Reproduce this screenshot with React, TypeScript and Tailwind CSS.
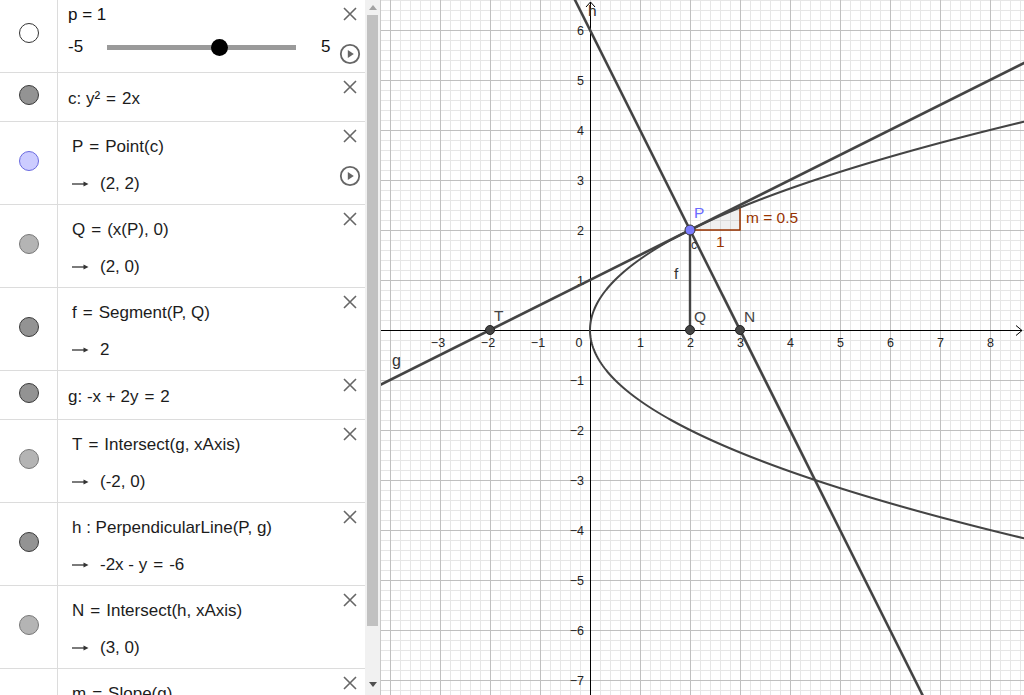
import React from "react";

function XIcon() {
  return (
    <svg width="16" height="16" viewBox="0 0 16 16">
      <path d="M2 2 L14 14 M14 2 L2 14" stroke="#666" strokeWidth="1.6" />
    </svg>
  );
}

function PlayIcon() {
  return (
    <svg width="22" height="22" viewBox="0 0 22 22">
      <circle cx="11" cy="11" r="9.2" fill="none" stroke="#666" strokeWidth="1.8" />
      <path d="M8.8 7 L14.8 11 L8.8 15 Z" fill="#666" />
    </svg>
  );
}

function Arrow() {
  return (
    <svg width="17" height="8" viewBox="0 0 17 8" className="shrink-0">
      <path d="M0 4 H14" stroke="#333" strokeWidth="1.3" />
      <path d="M11.5 1.5 L16.5 4 L11.5 6.5 Z" fill="#333" />
    </svg>
  );
}

function Eq({ text }: { text: string }) {
  const parts = text.split(" = ");
  return (
    <>
      {parts.map((p, i) => (
        <React.Fragment key={i}>
          {i > 0 && <span className="px-[6px]">=</span>}
          {p}
        </React.Fragment>
      ))}
    </>
  );
}

function Out({ text }: { text: string }) {
  return (
    <div className="flex items-center h-[20px]">
      <Arrow />
      <span className="ml-[11px]">
        <Eq text={text} />
      </span>
    </div>
  );
}

type RowProps = {
  h: string;
  marker: string;
  mt: string;
  pt: string;
  pl: string;
  play?: boolean;
  playMt?: string;
  children: React.ReactNode;
};

function Row({ h, marker, mt, pt, pl, play, playMt, children }: RowProps) {
  return (
    <div className={`flex shrink-0 border-b border-[#dcdcdc] ${h}`}>
      <div className="w-[58px] shrink-0 border-r border-[#dcdcdc] flex justify-center">
        <div className={`w-[20px] h-[20px] rounded-full border ${marker} ${mt}`} />
      </div>
      <div className={`flex-1 flex flex-col gap-[17px] leading-[20px] text-[17px] text-[#1c1c1c] ${pt} ${pl}`}>
        {children}
      </div>
      <div className="w-[26px] mr-[2px] flex flex-col items-center pt-[6px]">
        <XIcon />
        {play && (
          <div className={playMt}>
            <PlayIcon />
          </div>
        )}
      </div>
    </div>
  );
}

const DARK = "bg-[#939393] border-[#3a3a3a]";
const LIGHT = "bg-[#b4b4b4] border-[#787878]";

function Algebra() {
  return (
    <div className="w-[365px] h-full overflow-hidden shrink-0 flex flex-col bg-white">
      <div className="flex shrink-0 h-[73px] border-b border-[#dcdcdc]">
        <div className="w-[58px] shrink-0 border-r border-[#dcdcdc] flex justify-center">
          <div className="w-[20px] h-[20px] rounded-full border bg-white border-[#333] mt-[23px]" />
        </div>
        <div className="flex-1 flex flex-col pt-[5px] pl-[10px] leading-[20px] text-[17px] text-[#111]">
          <div>p = 1</div>
          <div className="flex items-center h-[20px] mt-[12px]">
            <span className="w-[39px]">-5</span>
            <div className="relative w-[189px] h-[5px] bg-[#9a9a9a]">
              <div className="absolute left-[104px] top-[-6px] w-[17px] h-[17px] rounded-full bg-black" />
            </div>
            <span className="ml-[25px]">5</span>
          </div>
        </div>
        <div className="w-[26px] mr-[2px] flex flex-col items-center pt-[6px]">
          <XIcon />
          <div className="mt-[21px]">
            <PlayIcon />
          </div>
        </div>
      </div>

      <Row h="h-[49px]" marker={DARK} mt="mt-[12px]" pt="pt-[16px]" pl="pl-[10px]">
        <div>
          c: y²<span className="px-[6px]">=</span>2x
        </div>
      </Row>

      <Row h="h-[83px]" marker="bg-[#ccccff] border-[#6a6ae0]" mt="mt-[29px]" pt="pt-[15px]" pl="pl-[14px]" play playMt="mt-[21px]">
        <div>
          <Eq text="P = Point(c)" />
        </div>
        <Out text="(2, 2)" />
      </Row>

      <Row h="h-[83px]" marker={LIGHT} mt="mt-[29px]" pt="pt-[15px]" pl="pl-[14px]">
        <div>
          <Eq text="Q = (x(P), 0)" />
        </div>
        <Out text="(2, 0)" />
      </Row>

      <Row h="h-[83px]" marker={DARK} mt="mt-[29px]" pt="pt-[15px]" pl="pl-[14px]">
        <div>
          <Eq text="f = Segment(P, Q)" />
        </div>
        <Out text="2" />
      </Row>

      <Row h="h-[49px]" marker={DARK} mt="mt-[12px]" pt="pt-[16px]" pl="pl-[10px]">
        <div>
          g: -x + 2y<span className="px-[6px]">=</span>2
        </div>
      </Row>

      <Row h="h-[83px]" marker={LIGHT} mt="mt-[29px]" pt="pt-[15px]" pl="pl-[14px]">
        <div>
          <Eq text="T = Intersect(g, xAxis)" />
        </div>
        <Out text="(-2, 0)" />
      </Row>

      <Row h="h-[83px]" marker={DARK} mt="mt-[29px]" pt="pt-[15px]" pl="pl-[14px]">
        <div>h : PerpendicularLine(P, g)</div>
        <Out text="-2x - y = -6" />
      </Row>

      <Row h="h-[83px]" marker={LIGHT} mt="mt-[29px]" pt="pt-[15px]" pl="pl-[14px]">
        <div>
          <Eq text="N = Intersect(h, xAxis)" />
        </div>
        <Out text="(3, 0)" />
      </Row>

      <Row h="h-[83px]" marker={DARK} mt="mt-[29px]" pt="pt-[15px]" pl="pl-[14px]">
        <div>
          <Eq text="m = Slope(g)" />
        </div>
        <Out text="0.5" />
      </Row>
    </div>
  );
}

function Scrollbar() {
  return (
    <div className="w-[15px] shrink-0 h-full bg-[#f1f1f1] flex flex-col items-center">
      <div className="h-[15px] flex items-center justify-center">
        <svg width="8" height="5" viewBox="0 0 8 5">
          <path d="M0 5 L4 0 L8 5 Z" fill="#a3a3a3" />
        </svg>
      </div>
      <div className="w-[11px] h-[611px] bg-[#c1c1c1]" />
      <div className="flex-1 flex items-end justify-center pb-[8px]">
        <svg width="8" height="5" viewBox="0 0 8 5">
          <path d="M0 0 L8 0 L4 5 Z" fill="#505050" />
        </svg>
      </div>
    </div>
  );
}

function Graph() {
  const W = 643,
    H = 695,
    ox = 209,
    oy = 330,
    u = 50;
  const X = (x: number) => ox + u * x;
  const Y = (y: number) => oy - u * y;
  const vMinor: number[] = [],
    vMajor: number[] = [],
    hMinor: number[] = [],
    hMajor: number[] = [];
  for (let k = -30; k <= 60; k++) {
    const x = ox + 10 * k;
    if (x < 0 || x > W) continue;
    (k % 5 === 0 ? vMajor : vMinor).push(x);
  }
  for (let k = -40; k <= 40; k++) {
    const y = oy + 10 * k;
    if (y < 0 || y > H) continue;
    (k % 5 === 0 ? hMajor : hMinor).push(y);
  }
  let para = "";
  for (let t = -4.8; t <= 4.8001; t += 0.04) {
    para += (para ? " L" : "M") + X((t * t) / 2).toFixed(2) + " " + Y(t).toFixed(2);
  }
  const font = '"Liberation Sans", Arial, sans-serif';
  const xLabels = [-3, -2, -1, 1, 2, 3, 4, 5, 6, 7, 8];
  const yLabels = [6, 5, 4, 3, 2, 1, -1, -2, -3, -4, -5, -6, -7];
  const lc = "#444";
  const brown = "#993300";
  const fs = "12.5";
  return (
    <svg width={W} height={H} viewBox={`0 0 ${W} ${H}`} className="block">
      <rect x="0" y="0" width={W} height={H} fill="#fff" />
      {vMinor.map((x) => (
        <line key={"vm" + x} x1={x + 0.5} y1={0} x2={x + 0.5} y2={H} stroke="#e6e6e6" strokeWidth="1" />
      ))}
      {hMinor.map((y) => (
        <line key={"hm" + y} x1={0} y1={y + 0.5} x2={W} y2={y + 0.5} stroke="#e6e6e6" strokeWidth="1" />
      ))}
      {vMajor.map((x) => (
        <line key={"vM" + x} x1={x + 0.5} y1={0} x2={x + 0.5} y2={H} stroke="#c0c0c0" strokeWidth="1" />
      ))}
      {hMajor.map((y) => (
        <line key={"hM" + y} x1={0} y1={y + 0.5} x2={W} y2={y + 0.5} stroke="#c0c0c0" strokeWidth="1" />
      ))}
      <line x1={0} y1={oy + 0.5} x2={W - 2} y2={oy + 0.5} stroke="#000" strokeWidth="1" />
      <line x1={ox + 0.5} y1={2} x2={ox + 0.5} y2={H} stroke="#000" strokeWidth="1" />
      <polyline points={`${W - 8},${oy - 4.5} ${W - 2},${oy + 0.5} ${W - 8},${oy + 5.5}`} fill="none" stroke="#000" strokeWidth="1" />
      <polyline points={`${ox - 4},${7} ${ox + 0.5},${2} ${ox + 5},${7}`} fill="none" stroke="#000" strokeWidth="1" />
      {xLabels.map((k) => (
        <text key={"xl" + k} x={X(k) + (k < 0 ? -2 : 0.5)} y={346.5} fontSize={fs} fontFamily={font} fill="#222" textAnchor="middle">
          {k < 0 ? "\u2212" + Math.abs(k) : String(k)}
        </text>
      ))}
      <text x={ox - 11} y={346.5} fontSize={fs} fontFamily={font} fill="#222" textAnchor="middle">
        0
      </text>
      {yLabels.map((k) => (
        <text key={"yl" + k} x={ox - 6} y={Y(k) + 5} fontSize={fs} fontFamily={font} fill="#222" textAnchor="end">
          {k < 0 ? "\u2212" + Math.abs(k) : String(k)}
        </text>
      ))}
      <polygon points={`${X(2)},${Y(2)} ${X(3)},${Y(2)} ${X(3)},${Y(2.5)}`} fill="#8a8a8a" fillOpacity="0.13" />
      <path d={`M${X(2)} ${Y(2)} H${X(3)} V${Y(2.5)}`} fill="none" stroke={brown} strokeWidth="1.5" />
      <path d={para} fill="none" stroke={lc} strokeWidth="2" />
      <line x1={X(-5)} y1={Y(-1.5)} x2={X(10)} y2={Y(6)} stroke={lc} strokeWidth="2.6" />
      <line x1={X(-1)} y1={Y(8)} x2={X(8)} y2={Y(-10)} stroke={lc} strokeWidth="2.6" />
      <line x1={X(2)} y1={Y(2)} x2={X(2)} y2={Y(0)} stroke={lc} strokeWidth="2.4" />
      <circle cx={X(2)} cy={Y(0)} r="4.5" fill="#444" stroke="#222" strokeWidth="1" />
      <circle cx={X(3)} cy={Y(0)} r="4.5" fill="#444" stroke="#222" strokeWidth="1" />
      <circle cx={X(-2)} cy={Y(0)} r="4.5" fill="#444" stroke="#222" strokeWidth="1" />
      <circle cx={X(2)} cy={Y(2)} r="5" fill="#7b7bff" stroke="#333" strokeWidth="1" />
      <text x={694 - 381} y={218} fontSize="15.5" fontFamily={font} fill="#6b6bff">
        P
      </text>
      <text x={694 - 381} y={322} fontSize="15.5" fontFamily={font} fill="#444">
        Q
      </text>
      <text x={744 - 381} y={322} fontSize="15.5" fontFamily={font} fill="#444">
        N
      </text>
      <text x={494 - 381} y={321} fontSize="15.5" fontFamily={font} fill="#444">
        T
      </text>
      <text x={392 - 381} y={366} fontSize="16" fontFamily={font} fill="#333">
        g
      </text>
      <text x={588 - 381} y={16} fontSize="15.5" fontFamily={font} fill="#333">
        h
      </text>
      <text x={674 - 381} y={279} fontSize="15.5" fontFamily={font} fill="#333">
        f
      </text>
      <text x={691 - 381} y={249} fontSize="12" fontFamily={font} fill="#333">
        c
      </text>
      <text x={746 - 381} y={223} fontSize="15.5" fontFamily={font} fill={brown}>
        m = 0.5
      </text>
      <text x={716 - 381} y={247} fontSize="15.5" fontFamily={font} fill={brown}>
        1
      </text>
    </svg>
  );
}

export default function App() {
  return (
    <div className="flex w-[1024px] h-[695px] overflow-hidden bg-white font-['Liberation_Sans',Arial,sans-serif]">
      <Algebra />
      <Scrollbar />
      <div className="w-px shrink-0 bg-[#c8c8c8]" />
      <div className="flex-1 overflow-hidden">
        <Graph />
      </div>
    </div>
  );
}
